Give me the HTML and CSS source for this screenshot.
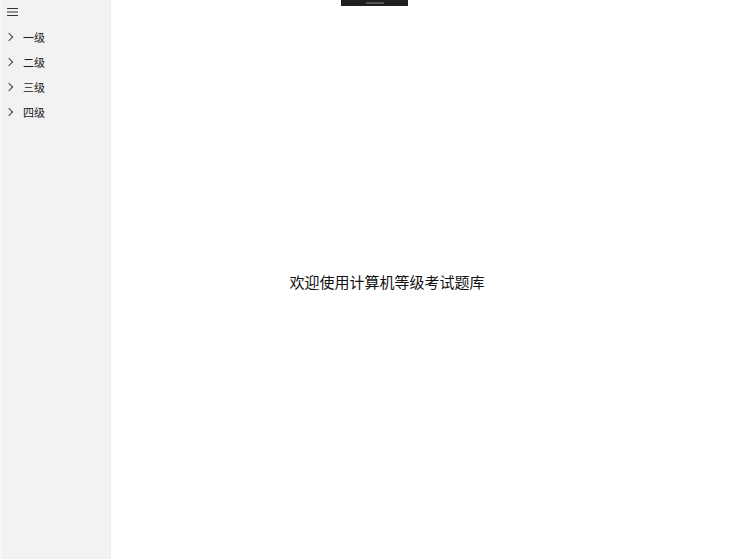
FILE: index.html
```html
<!DOCTYPE html>
<html lang="zh-CN">
<head>
    <meta charset="UTF-8">
    <title>计算机等级考试题库</title>
    <link rel="stylesheet" href="styles.css">
</head>
<body>
    <div class="app">
        <!-- 左侧导航 -->
        <nav class="sidebar">
            <div class="menu-toggle">
                <svg width="11" height="8" viewBox="0 0 11 8">
                    <path d="M0 0.5H11M0 4H11M0 7.5H11" stroke="#333" stroke-width="1"/>
                </svg>
            </div>
            <ul class="menu">
                <li class="menu-item"><span class="chevron"></span>一级</li>
                <li class="menu-item"><span class="chevron"></span>二级</li>
                <li class="menu-item"><span class="chevron"></span>三级</li>
                <li class="menu-item"><span class="chevron"></span>四级</li>
            </ul>
        </nav>

        <!-- 主内容 -->
        <main class="content">
            <p class="welcome">欢迎使用计算机等级考试题库</p>
        </main>
    </div>

    <div class="drag-bar"><span class="handle"></span></div>
</body>
</html>
```

FILE: styles.css
```css
html, body {
    margin: 0;
    padding: 0;
    height: 100%;
}

body {
    font-family: "Noto Sans CJK SC", "Noto Sans", sans-serif;
    background-color: #fff;
    color: #1a1a1a;
}

.app {
    display: flex;
    height: 100%;
}

.sidebar {
    width: 108px;
    flex-shrink: 0;
    background-color: #f2f2f3;
    border-left: 2px solid #f6f6f7;
    border-right: 1px solid #ececed;
}

.menu-toggle {
    height: 24px;
    display: flex;
    align-items: center;
    padding-left: 5px;
}

.menu {
    list-style: none;
    margin: 0;
    padding: 0;
}

.menu-item {
    height: 25px;
    display: flex;
    align-items: center;
    font-size: 11px;
    padding-left: 4px;
}

.chevron {
    width: 5px;
    height: 5px;
    border-top: 1px solid #444;
    border-right: 1px solid #444;
    transform: rotate(45deg);
    margin-right: 11px;
}

.content {
    flex: 1;
    display: flex;
    justify-content: center;
    align-items: center;
    padding-right: 87px;
    padding-top: 3px;
}

.welcome {
    margin: 0;
    font-size: 15px;
    color: #111;
}

.drag-bar {
    position: absolute;
    top: 0;
    left: 341px;
    width: 67px;
    height: 6px;
    background-color: #1f1f1f;
    display: flex;
    justify-content: center;
    align-items: center;
}

.handle {
    width: 18px;
    height: 2px;
    background-color: #555;
}
```
